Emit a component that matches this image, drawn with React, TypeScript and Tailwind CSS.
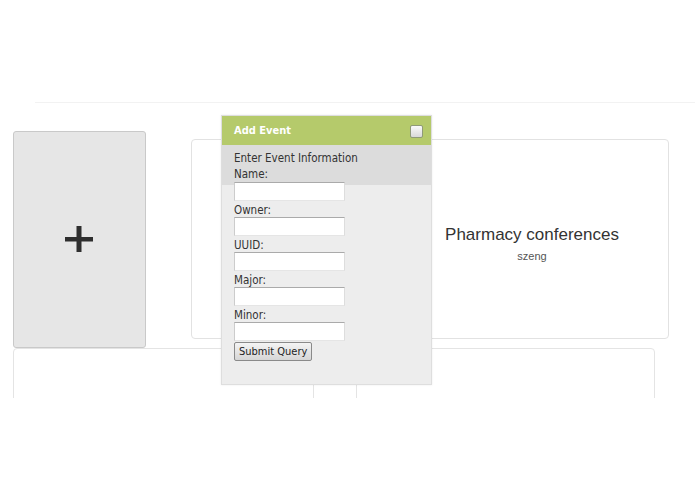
import React from 'react'

const fields = ['Owner:', 'UUID:', 'Major:', 'Minor:']

function Field() {
  return (
    <div className="h-[19px] w-[111px] border border-t-[#aaa] border-r-[#ddd] border-b-[#e5e5e5] border-l-[#ccc] bg-white" />
  )
}

function AddEvent() {
  return (
    <div className="absolute top-[115px] left-[221px] w-[211px] h-[270px] border border-[#dedede] bg-[#ededed] font-['DejaVu_Sans_Condensed','DejaVu_Sans',sans-serif] text-[11.5px] text-[#333] shadow-[0_0_2px_rgba(0,0,0,0.08)]">
      <div className="flex h-[29px] items-center justify-between bg-[#b5ca6b] pt-[2px] pr-[8px] pl-[12px]">
        <span className="text-[11px] font-bold text-white">Add Event</span>
        <span className="h-[13px] w-[13px] rounded-[2px] border border-[#8f9a79] bg-gradient-to-b from-[#fafafa] to-[#d9d9d9]" />
      </div>
      <div className="h-[40px] bg-[#dcdcdc] px-[12px] pt-[5px] leading-[16px]">
        <div>Enter Event Information</div>
        <div>Name:</div>
      </div>
      <div className="-mt-[3px] px-[12px]">
        <Field />
        {fields.map((f) => (
          <div key={f}>
            <div className="h-[16px] pt-[1px] leading-[16px]">{f}</div>
            <Field />
          </div>
        ))}
        <button className="mt-[1px] h-[19px] rounded-[2px] border border-[#8a8a8a] bg-gradient-to-b from-[#f4f4f4] to-[#d6d6d6] px-[4px] text-[11px] leading-[15px] text-[#222]">
          Submit Query
        </button>
      </div>
    </div>
  )
}

export default function App() {
  return (
    <div className="relative h-[494px] w-[695px] overflow-hidden bg-white font-['Liberation_Sans',Arial,sans-serif]">
      <div className="h-[102px]" />
      <div className="ml-[35px] h-px bg-[#f2f2f2]" />
      <div className="h-[295px] overflow-hidden pl-[13px]">
        <div className="flex items-start">
          <div className="mt-[28px] flex h-[217px] w-[133px] items-center justify-center rounded-[3px] border border-[#c9c9c9] bg-[#e6e6e6] pr-[2px] pb-[2px]">
            <svg width="28" height="26" viewBox="0 0 28 26">
              <rect x="11.5" y="0" width="5" height="26" fill="#2e2e2e" />
              <rect x="0" y="11" width="28" height="4.5" fill="#2e2e2e" />
            </svg>
          </div>
          <div className="mt-[36px] ml-[45px] flex h-[200px] w-[478px] flex-col items-center justify-center rounded-[4px] border border-[#e2e2e2] pt-[10px]">
            <div className="pl-[204px] text-[17px] leading-[22px] whitespace-nowrap text-[#333]">Pharmacy conferences</div>
            <div className="mt-[2px] pl-[204px] text-[11px] text-[#555]">szeng</div>
          </div>
        </div>
        <div className="flex h-[80px] w-[642px] rounded-t-[4px] border border-[#e4e4e4]">
          <div className="w-[300px] border-r border-[#e4e4e4]" />
          <div className="w-[43px] border-r border-[#e4e4e4]" />
        </div>
      </div>
      <AddEvent />
    </div>
  )
}
